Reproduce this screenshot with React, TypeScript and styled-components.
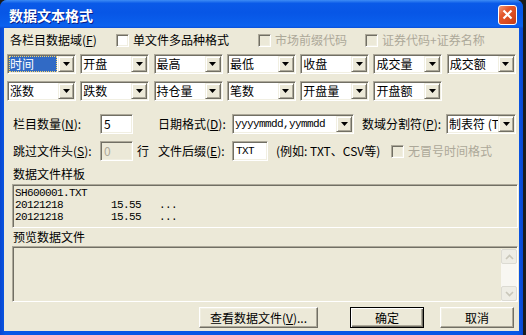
import styled, { createGlobalStyle } from "styled-components";

const GlobalStyle = createGlobalStyle`
  html, body {
    margin: 0;
    padding: 0;
    background: #1b1b1b;
  }
  * {
    box-sizing: border-box;
  }
  body {
    font-family: "Noto Sans CJK SC", "DejaVu Sans", sans-serif;
    font-size: 12px;
    line-height: 14px;
    color: #000;
  }
`;

// classic 3D edges in the XP beige palette
const FACE = "#ece9d8";
const LIGHT = "#f1efe2";
const SHADOW = "#aca899";
const DARK = "#716f64";
const GRAYTEXT = "#aca899";

const Desktop = styled.div`
  width: 526px;
  height: 335px;
  display: flex;
  overflow: hidden;
`;

const Window = styled.div`
  width: 523px;
  height: 335px;
  display: flex;
  flex-direction: column;
  border-radius: 7px 7px 0 0;
  overflow: hidden;
  background: linear-gradient(90deg, #0a47d0 0%, #0858e6 1%, #0858e6 99%, #0a47d0 100%);
`;

const TitleBar = styled.div`
  height: 28px;
  flex-shrink: 0;
  display: flex;
  align-items: center;
  justify-content: space-between;
  padding: 0 6px 0 9px;
  background: linear-gradient(
    180deg,
    #3d8cf5 0%,
    #0a5ae8 12%,
    #0756e6 45%,
    #0a5fec 85%,
    #0b62f0 93%,
    #0a4fd8 100%
  );
`;

const Title = styled.div`
  color: #fff;
  font-weight: bold;
  font-size: 14px;
  line-height: 18px;
  text-shadow: 1px 1px #0a1f8a;
  margin-top: 1px;
`;

const CloseButton = styled.div`
  width: 19px;
  height: 20px;
  margin-top: 1px;
  border: 1px solid #fff;
  border-radius: 3px;
  background: linear-gradient(135deg, #f19a78 0%, #e4572c 35%, #d74a20 70%, #c23c16 100%);
  display: flex;
  align-items: center;
  justify-content: center;
`;

const Client = styled.div`
  flex: 1;
  margin: 0 4px 4px 4px;
  background: ${FACE};
  display: flex;
  flex-direction: column;
  padding-left: 3px;
`;

const Row = styled.div<{ $indent: number; $top: number; $h: number }>`
  display: flex;
  align-items: center;
  height: ${(p) => p.$h}px;
  margin-top: ${(p) => p.$top}px;
  padding-left: ${(p) => p.$indent}px;
  white-space: nowrap;
`;

const Label = styled.span<{ $w?: number; $ml?: number; $disabled?: boolean }>`
  flex-shrink: 0;
  width: ${(p) => (p.$w ? `${p.$w}px` : "auto")};
  margin-left: ${(p) => p.$ml ?? 0}px;
  color: ${(p) => (p.$disabled ? GRAYTEXT : "#000")};
  white-space: nowrap;
  line-height: 16px;
`;

const CheckItem = styled.div<{ $w?: number }>`
  display: flex;
  align-items: center;
  gap: 4px;
  width: ${(p) => (p.$w ? `${p.$w}px` : "auto")};
  flex-shrink: 0;
`;

const CheckBox = styled.span<{ $disabled?: boolean }>`
  width: 13px;
  height: 13px;
  flex-shrink: 0;
  background: ${(p) => (p.$disabled ? FACE : "#fff")};
  border: 1px solid;
  border-color: ${SHADOW} #fff #fff ${SHADOW};
  box-shadow: inset 1px 1px ${DARK}, inset -1px -1px ${LIGHT};
`;

const ComboGrid = styled.div`
  display: grid;
  grid-template-columns: repeat(7, 69px);
  grid-auto-rows: 20px;
  column-gap: 4.3px;
  row-gap: 7px;
  margin-top: 7px;
`;

const ComboBox = styled.div<{ $w?: number }>`
  width: ${(p) => (p.$w ? `${p.$w}px` : "100%")};
  height: 20px;
  flex-shrink: 0;
  display: flex;
  align-items: stretch;
  background: #fff;
  border: 1px solid;
  border-color: ${SHADOW} #fff #fff ${SHADOW};
  box-shadow: inset 1px 1px ${DARK}, inset -1px -1px ${LIGHT};
  padding: 1px;
`;

const ComboText = styled.div<{ $selected?: boolean; $mono?: boolean }>`
  flex: 1;
  min-width: 0;
  padding-left: 1px;
  margin: 0 1px 0 0;
  line-height: 16px;
  white-space: nowrap;
  background: ${(p) => (p.$selected ? "#316ac5" : "transparent")};
  color: ${(p) => (p.$selected ? "#fff" : "#000")};
  outline: ${(p) => (p.$selected ? "1px dotted #f3d36b" : "none")};
  outline-offset: -1px;
  font-family: ${(p) =>
    p.$mono
      ? `"Liberation Mono", "DejaVu Sans Mono", "Noto Sans CJK SC", monospace`
      : "inherit"};
  font-size: ${(p) => (p.$mono ? "11px" : "12px")};
  letter-spacing: ${(p) => (p.$mono ? "-0.6px" : "0")};
`;

const DropButton = styled.div`
  width: 16px;
  height: 16px;
  flex-shrink: 0;
  background: ${FACE};
  border: 1px solid;
  border-color: ${LIGHT} ${DARK} ${DARK} ${LIGHT};
  box-shadow: inset 1px 1px #fff, inset -1px -1px ${SHADOW};
  display: flex;
  align-items: center;
  justify-content: center;
`;

const TextField = styled.div<{ $w: number; $disabled?: boolean; $mono?: boolean }>`
  width: ${(p) => p.$w}px;
  height: 20px;
  flex-shrink: 0;
  padding: 1px 3px;
  line-height: 16px;
  background: ${(p) => (p.$disabled ? FACE : "#fff")};
  color: ${(p) => (p.$disabled ? GRAYTEXT : "#000")};
  border: 1px solid;
  border-color: ${SHADOW} #fff #fff ${SHADOW};
  box-shadow: inset 1px 1px ${DARK}, inset -1px -1px ${LIGHT};
  font-family: ${(p) =>
    p.$mono ? `"Liberation Mono", "DejaVu Sans Mono", monospace` : "inherit"};
  font-size: ${(p) => (p.$mono ? "11px" : "12px")};
  letter-spacing: ${(p) => (p.$mono ? "-0.6px" : "0")};
`;

const Caption = styled.div<{ $top: number }>`
  height: 14px;
  line-height: 14px;
  margin-top: ${(p) => p.$top}px;
  padding-left: 6px;
`;

const SunkenPanel = styled.div<{ $h: number; $top: number }>`
  width: 506px;
  height: ${(p) => p.$h}px;
  margin: ${(p) => p.$top}px 0 0 5px;
  border: 1px solid;
  border-color: ${SHADOW} #fff #fff ${SHADOW};
  box-shadow: inset 1px 1px ${DARK};
`;

const SampleText = styled.div`
  padding: 2px 0 0 2px;
  font-family: "Liberation Mono", "DejaVu Sans Mono", monospace;
  font-size: 11px;
  letter-spacing: -0.6px;
  line-height: 12px;
`;

const SampleLine = styled.div`
  display: grid;
  grid-template-columns: 96px 48px auto;
  height: 12px;
`;

const PreviewInner = styled.div`
  height: 100%;
  display: flex;
  justify-content: flex-end;
  padding: 2px 0 0 0;
`;

const ScrollBar = styled.div`
  width: 16px;
  height: 52px;
  background: #f8f7f2;
  display: flex;
  flex-direction: column;
  justify-content: space-between;
`;

const ScrollButton = styled.div`
  width: 16px;
  height: 15px;
  background: #eeede5;
  border: 1px solid #dcdbd3;
  border-radius: 2px;
  display: flex;
  align-items: center;
  justify-content: center;
`;

const ButtonRow = styled.div`
  display: flex;
  justify-content: flex-end;
  margin-top: 5px;
  padding-right: 5px;
`;

const PushButton = styled.div<{ $w: number; $ml?: number; $default?: boolean }>`
  width: ${(p) => p.$w}px;
  height: 21px;
  margin-left: ${(p) => p.$ml ?? 0}px;
  display: flex;
  align-items: center;
  justify-content: center;
  line-height: 16px;
  background: ${FACE};
  border: 1px solid;
  border-color: ${(p) => (p.$default ? "#000" : `#fff ${DARK} ${DARK} #fff`)};
  box-shadow: ${(p) =>
    p.$default
      ? `inset 1px 1px #fff, inset -1px -1px ${DARK}, inset -2px -2px ${SHADOW}`
      : `inset -1px -1px ${SHADOW}, inset 1px 1px ${LIGHT}`};
`;

const Arrow = () => (
  <svg width="7" height="4" viewBox="0 0 7 4">
    <polygon points="0,0 7,0 3.5,4" fill="#000" />
  </svg>
);

const Chevron = ({ up }: { up?: boolean }) => (
  <svg width="9" height="6" viewBox="0 0 9 6">
    <polyline
      points={up ? "1,5 4.5,1.5 8,5" : "1,1 4.5,4.5 8,1"}
      fill="none"
      stroke="#c9c7ba"
      strokeWidth="1.6"
    />
  </svg>
);

const Combo = ({
  text,
  w,
  selected,
  mono,
}: {
  text: string;
  w?: number;
  selected?: boolean;
  mono?: boolean;
}) => (
  <ComboBox $w={w}>
    <ComboText $selected={selected} $mono={mono}>
      {text}
    </ComboText>
    <DropButton>
      <Arrow />
    </DropButton>
  </ComboBox>
);

const Key = ({ k }: { k: string }) => (
  <>
    (<u>{k}</u>)
  </>
);

const fieldsRow1 = ["时间", "开盘", "最高", "最低", "收盘", "成交量", "成交额"];
const fieldsRow2 = ["涨数", "跌数", "持仓量", "笔数", "开盘量", "开盘额"];

const sampleRows = [
  ["20121218", "15.55", "..."],
  ["20121218", "15.55", "..."],
];

export default function App() {
  return (
    <>
      <GlobalStyle />
      <Desktop>
        <Window>
          <TitleBar>
            <Title>数据文本格式</Title>
            <CloseButton>
              <svg width="11" height="11" viewBox="0 0 11 11">
                <path d="M1.5 1.5 L9.5 9.5 M9.5 1.5 L1.5 9.5" stroke="#fff" strokeWidth="2.2" />
              </svg>
            </CloseButton>
          </TitleBar>
          <Client>
            <Row $indent={3} $top={5} $h={14}>
              <Label $w={106}>
                各栏目数据域<Key k="F" />
              </Label>
              <CheckItem $w={142}>
                <CheckBox />
                <Label>单文件多品种格式</Label>
              </CheckItem>
              <CheckItem $w={107}>
                <CheckBox $disabled />
                <Label $disabled>市场前缀代码</Label>
              </CheckItem>
              <CheckItem>
                <CheckBox $disabled />
                <Label $disabled>证券代码+证券名称</Label>
              </CheckItem>
            </Row>

            <ComboGrid>
              {fieldsRow1.map((f, i) => (
                <Combo key={`a${i}`} text={f} selected={i === 0} />
              ))}
              {fieldsRow2.map((f, i) => (
                <Combo key={`b${i}`} text={f} />
              ))}
            </ComboGrid>

            <Row $indent={6} $top={13} $h={20}>
              <Label $w={87}>
                栏目数量<Key k="N" />:
              </Label>
              <TextField $w={33}>5</TextField>
              <Label $w={74} $ml={25}>
                日期格式<Key k="D" />:
              </Label>
              <Combo text="yyyymmdd,yymmdd" w={122} mono />
              <Label $w={84} $ml={8}>
                数域分割符<Key k="P" />:
              </Label>
              <Combo text="制表符 (T" w={70} />
            </Row>

            <Row $indent={6} $top={7} $h={20}>
              <Label $w={87}>
                跳过文件头<Key k="S" />:
              </Label>
              <TextField $w={33} $disabled>
                0
              </TextField>
              <Label $w={21} $ml={4}>
                行
              </Label>
              <Label $w={74}>
                文件后缀<Key k="E" />:
              </Label>
              <TextField $w={36} $mono>
                TXT
              </TextField>
              <Label $w={115} $ml={8}>
                (例如: TXT、CSV等)
              </Label>
              <CheckItem>
                <CheckBox $disabled />
                <Label $disabled>无冒号时间格式</Label>
              </CheckItem>
            </Row>

            <Caption $top={6}>数据文件样板</Caption>
            <SunkenPanel $h={44} $top={3}>
              <SampleText>
                <SampleLine>SH600001.TXT</SampleLine>
                {sampleRows.map((r, i) => (
                  <SampleLine key={i}>
                    <span>{r[0]}</span>
                    <span>{r[1]}</span>
                    <span>{r[2]}</span>
                  </SampleLine>
                ))}
              </SampleText>
            </SunkenPanel>

            <Caption $top={2}>预览数据文件</Caption>
            <SunkenPanel $h={56} $top={2}>
              <PreviewInner>
                <ScrollBar>
                  <ScrollButton>
                    <Chevron up />
                  </ScrollButton>
                  <ScrollButton>
                    <Chevron />
                  </ScrollButton>
                </ScrollBar>
              </PreviewInner>
            </SunkenPanel>

            <ButtonRow>
              <PushButton $w={119}>
                查看数据文件<Key k="V" />...
              </PushButton>
              <PushButton $w={74} $ml={32} $default>
                确定
              </PushButton>
              <PushButton $w={74} $ml={16}>
                取消
              </PushButton>
            </ButtonRow>
          </Client>
        </Window>
      </Desktop>
    </>
  );
}
